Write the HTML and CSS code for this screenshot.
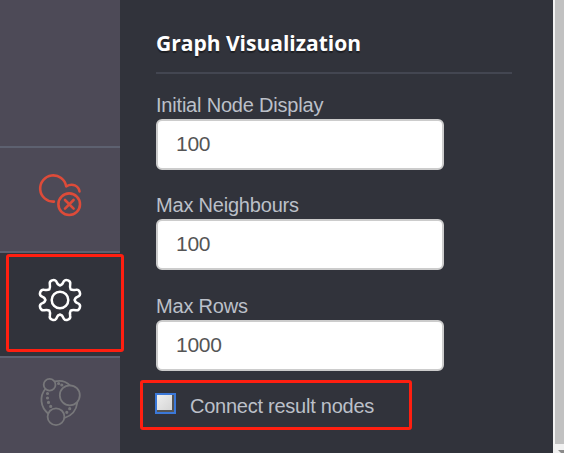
FILE: index.html
```html
<!DOCTYPE html>
<html lang="en">
<head>
<meta charset="utf-8">
<title>Settings</title>
<link rel="stylesheet" href="styles.css">
</head>
<body>
<div class="app">
  <nav class="sidebar">
    <div class="spacer"></div>
    <div class="item">
      <svg class="icon cloud" viewBox="0 0 42 42">
        <path d="M14.9 27.6A13.1 13.1 0 1 1 27.2 12.4C33.5 8.8 39.5 11.7 40.5 17.4"/>
        <circle cx="30.2" cy="30.2" r="10.8"/>
        <path d="M26 26l8.6 8.6M34.6 26L26 34.6"/>
      </svg>
    </div>
    <div class="item active">
      <svg class="icon gear" viewBox="-21 -21 42 42">
        <defs><path id="quarter" d="M0-14.8C3-14.8 2.8-17.5 4-19C5-20.3 6.5-20.3 8-19.7C9.8-19 10.6-17.8 10.2-16C9.8-13.5 9.6-12.2 10.6-10.6C12.2-9.6 13.5-9.8 16-10.2C17.8-10.6 19-9.8 19.7-8C20.3-6.5 20.3-5 19-4C17.5-2.8 14.8-3 14.8 0"/></defs>
        <use href="#quarter"/>
        <use href="#quarter" transform="rotate(90)"/>
        <use href="#quarter" transform="rotate(180)"/>
        <use href="#quarter" transform="rotate(270)"/>
        <circle r="8.3"/>
      </svg>
      <div class="mark mark-settings"></div>
    </div>
    <div class="item">
      <svg class="icon graph" viewBox="0 0 42 48">
        <circle cx="10.6" cy="6.8" r="5.9"/>
        <circle cx="30.8" cy="17.3" r="10"/>
        <circle cx="17" cy="38.7" r="8.4"/>
        <path d="M16 3.3C21 2.2 27 3.3 31 7.3M6.3 11C.5 18 1 29 9.3 35.7M38.3 24.5C37.5 31.5 33 37.5 25.5 40"/>
        <path class="dots" d="M19.6 5.5h0M22.8 7h0M8.5 15.5h0M8.5 20h0M9.5 24.4h0M11.7 28.4h0M30.7 30.7h0M27.8 34.3h0"/>
      </svg>
    </div>
  </nav>
  <main class="drawer">
    <h1>Graph Visualization</h1>
    <label class="field"><span>Initial Node Display</span><input type="text" value="100"></label>
    <label class="field neighbours"><span>Max Neighbours</span><input type="text" value="100"></label>
    <label class="field rows"><span>Max Rows</span><input type="text" value="1000"></label>
    <div class="check">
      <span class="box"></span><span class="result">Connect result nodes</span>
    </div>
  </main>
  <div class="scrollbar"><div class="thumb"></div><div class="arrow"></div></div>
</div>
</body>
</html>
```
FILE: styles.css
```css
* { box-sizing: border-box; }
body { margin: 0; overflow: hidden; background: #31333b; font-family: "Liberation Sans", Arial, sans-serif; }
.app { display: flex; width: 564px; height: 453px; overflow: hidden; }
.sidebar { width: 120px; flex: none; background: #4d4a57; }
.spacer { height: 146px; }
.item { position: relative; height: 105px; border-top: 2px solid #5d6170; display: flex; justify-content: center; padding-top: 26px; }
.item.active { background: #31333b; }
.icon { width: 42px; height: 42px; fill: none; stroke-linecap: round; stroke-linejoin: round; overflow: visible; }
.cloud { stroke: #dd4b39; stroke-width: 2.6; }
.gear { stroke: #fff; stroke-width: 2.5; }
.graph { height: 48px; margin-top: -6px; stroke: #77777a; stroke-width: 1.8; }
.graph .dots { stroke-width: 3.2; }
.mark { position: absolute; border: 3px solid #ff1f10; border-radius: 3px; }
.mark-settings { left: 6px; top: 1px; width: 118px; height: 98px; z-index: 1; }
.drawer { width: 433px; flex: none; padding: 27px 41px 0 36px; }
h1 { margin: 0 0 20px; height: 47px; border-bottom: 2px solid #434651; color: #fff; font: bold 21px/32px "Open Sans", sans-serif; text-shadow: 0 2px 1px rgba(0,0,0,.4); }
.field { display: block; height: 100px; font-size: 20px; line-height: 23px; letter-spacing: -.2px; color: #bcc0c9; }
.field span { display: block; height: 25px; }
.neighbours { height: 101px; }
.rows { height: 85px; }
.field input { display: block; width: 288px; height: 51px; border: 2px solid #ccc; border-radius: 6px; background: #fff; padding: 0 18px 2px; font: 21px "Liberation Sans", Arial, sans-serif; letter-spacing: -.3px; color: #555; }
.check { display: flex; align-items: center; width: 272px; height: 50px; margin-left: -16px; border: 3px solid #ff1f10; border-radius: 3px; padding-left: 12px; font-size: 20px; letter-spacing: -.25px; color: #bcc0c9; }
.result { padding-top: 2px; }
.box { width: 21px; height: 21px; margin: -3px 14px 0 0; border: 2px solid #3b78d8; background: linear-gradient(135deg, #eee, #d5d5d5) 0 0 / 15px 15px no-repeat, #555; }
.scrollbar { width: 11px; border-left: 2px solid #f1f1f1; background: #f1f1f1; overflow: hidden; }
.thumb { height: 444px; background: #c1c1c1; }
.arrow { margin: 6px 0 0 3px; width: 0; border: 5px solid transparent; border-top-color: #8b8b8b; border-bottom: 0; }
```
